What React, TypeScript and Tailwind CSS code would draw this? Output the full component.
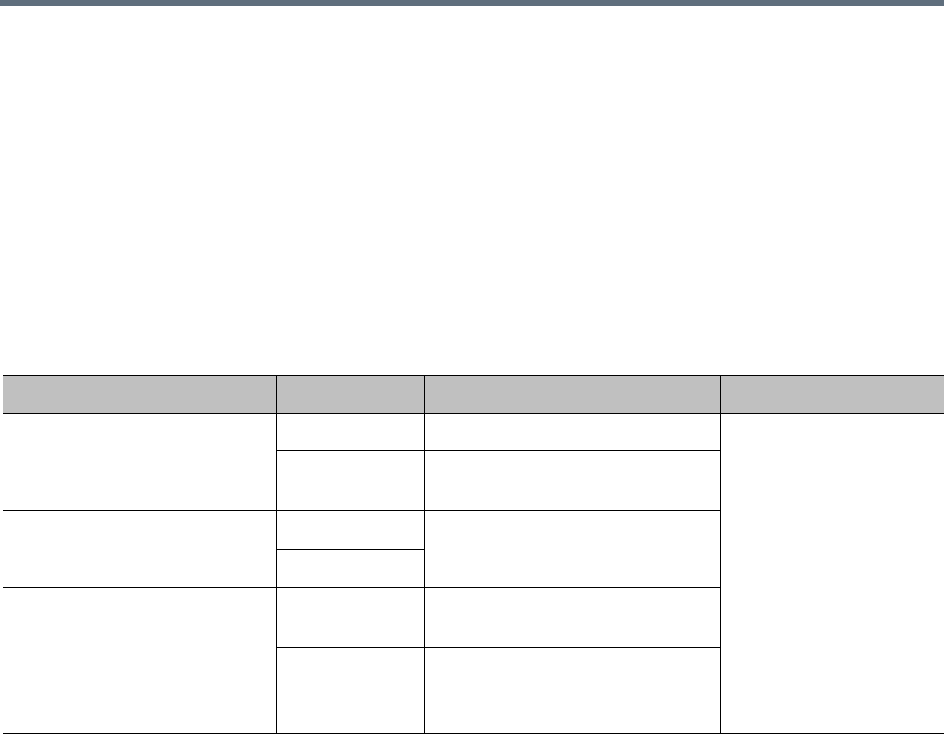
import React from "react";

type Cell = { col: string; row: string; head?: boolean; last?: boolean };

const cells: Cell[] = [
  { col: "col-start-1", row: "row-start-1", head: true },
  { col: "col-start-2", row: "row-start-1", head: true },
  { col: "col-start-3", row: "row-start-1", head: true },
  { col: "col-start-4", row: "row-start-1", head: true, last: true },
  // first column: three merged groups
  { col: "col-start-1", row: "row-start-2 row-span-2" },
  { col: "col-start-1", row: "row-start-4 row-span-2" },
  { col: "col-start-1", row: "row-start-6 row-span-2" },
  // second column: one cell per row
  { col: "col-start-2", row: "row-start-2" },
  { col: "col-start-2", row: "row-start-3" },
  { col: "col-start-2", row: "row-start-4" },
  { col: "col-start-2", row: "row-start-5" },
  { col: "col-start-2", row: "row-start-6" },
  { col: "col-start-2", row: "row-start-7" },
  // third column
  { col: "col-start-3", row: "row-start-2" },
  { col: "col-start-3", row: "row-start-3" },
  { col: "col-start-3", row: "row-start-4 row-span-2" },
  { col: "col-start-3", row: "row-start-6" },
  { col: "col-start-3", row: "row-start-7" },
  // last column spans the whole body
  { col: "col-start-4", row: "row-start-2 row-span-6", last: true },
];

export default function App() {
  return (
    <div className="w-[944px] h-[734px] overflow-hidden bg-white">
      <div className="h-[6px] bg-[#5f6e7d]" />
      <div className="mt-[369px] ml-[3px] w-[941px] border-t border-black grid grid-cols-[274px_148px_296px_1fr] grid-rows-[38px_37px_60px_39px_38px_60px_86px]">
        {cells.map((c, i) => (
          <div
            key={i}
            className={`${c.col} ${c.row} border-b border-black ${
              c.last ? "" : "border-r"
            } ${c.head ? "bg-[#c0c0c0]" : "bg-white"}`}
          />
        ))}
      </div>
    </div>
  );
}
